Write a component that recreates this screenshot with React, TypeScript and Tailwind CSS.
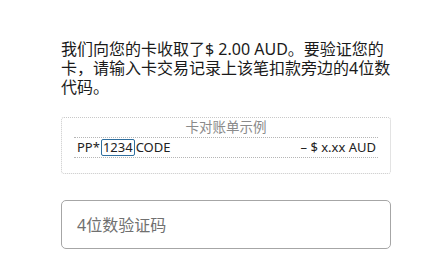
import React from 'react';

const font = { fontFamily: '"Noto Sans", "Noto Sans CJK SC", sans-serif' };

export default function App() {
  return (
    <div className="min-h-[274px] w-[423px] bg-white" style={font}>
      <div className="ml-[61px] w-[330px] pt-[40px]">
        <p className="text-[16px] leading-[19px] text-[#1a1a1a]">
          我们向您的卡收取了$ 2.00 AUD。要验证您的卡，请输入卡交易记录上该笔扣款旁边的4位数代码。
        </p>

        <div className="mt-[20px] h-[57px] rounded-[3px] border border-dotted border-[#c8c8c8] px-[12px]">
          <div className="h-[19px] text-center text-[13.5px] leading-[19px] text-[#8a8a8a]">卡对账单示例</div>
          <div className="flex h-[21px] items-center justify-between border-y border-dotted border-[#b5b5b5] text-[13px] text-[#222]">
            <div className="flex items-center pl-[3px]">
              <span>PP*</span>
              <span className="mx-[1px] flex h-[17px] items-center rounded-[2px] border border-[#2f6f9f] px-[1px] leading-none">1234</span>
              <span>CODE</span>
            </div>
            <span className="pr-[2px]">– $ x.xx AUD</span>
          </div>
        </div>

        <div className="mt-[26px] flex h-[49px] items-center rounded-[5px] border border-[#a6a6a6] pl-[15px] text-[16px] text-[#707070]">
          4位数验证码
        </div>
      </div>
    </div>
  );
}
